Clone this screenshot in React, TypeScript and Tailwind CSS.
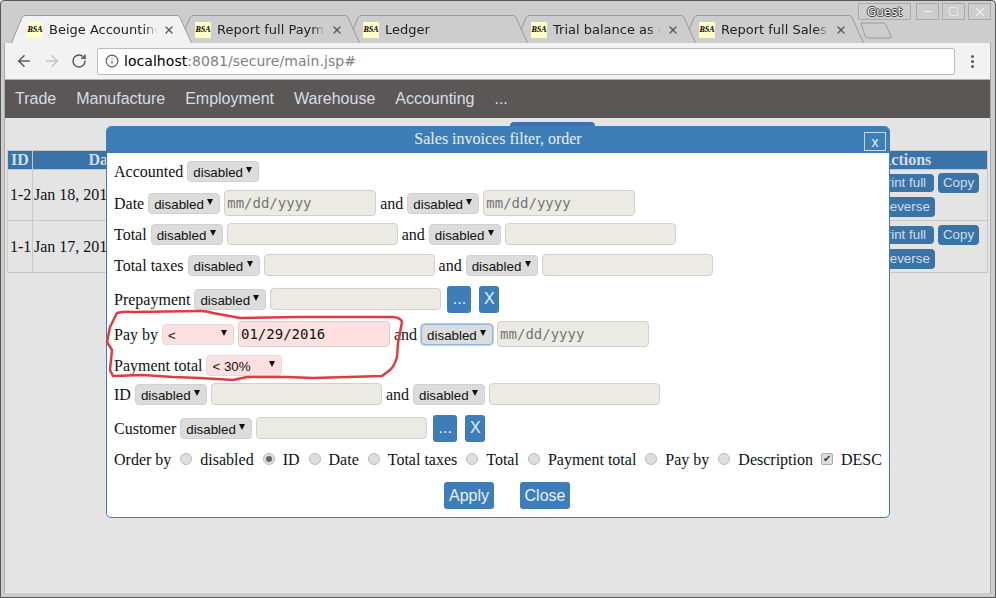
import { ArrowLeft, ArrowRight, Info, Minus, RotateCw, Square, X } from 'lucide-react';

const tabs = [
  { title: 'Beige Accounting', active: true, z: 'z-10' },
  { title: 'Report full Payments', active: false, z: 'z-[5]' },
  { title: 'Ledger', active: false, z: 'z-[4]' },
  { title: 'Trial balance as of', active: false, z: 'z-[3]' },
  { title: 'Report full Sales', active: false, z: 'z-[2]' },
];

const menu = ['Trade', 'Manufacture', 'Employment', 'Warehouse', 'Accounting', '...'];

const serif = "font-['Liberation_Serif',serif]";

function Tab({ title, active, z }: { title: string; active: boolean; z: string }) {
  return (
    <div className={`relative h-[28px] w-[168px] shrink-0 ${z}`}>
      <svg className="absolute left-0 top-0" width="181" height="28" viewBox="0 0 181 28">
        <path
          d="M0.5 28 L11 2.5 Q12 0.5 14 0.5 L166 0.5 Q168 0.5 169 2.5 L180.5 28"
          fill={active ? '#f2f2f2' : '#cdcdcd'}
          stroke="#9a9a9a"
        />
      </svg>
      <div className="absolute left-[16px] top-[7px] flex items-center">
        <Favicon />
        <span className="ml-[6px] w-[108px] overflow-hidden whitespace-nowrap font-['DejaVu_Sans',sans-serif] text-[13px] leading-[16px] text-[#222] [mask-image:linear-gradient(to_right,black_88%,transparent)]">
          {title}
        </span>
      </div>
      {title !== 'Ledger' && (
        <X className="absolute left-[152px] top-[9px] text-[#555]" size={12} strokeWidth={2.5} />
      )}
    </div>
  );
}

function Favicon() {
  return (
    <span className="flex h-[16px] w-[16px] items-center justify-center bg-[#ffffc8] font-['Liberation_Serif',serif] text-[8px] font-bold italic text-black">
      BSA
    </span>
  );
}

function Sel({
  label = 'disabled',
  w = 'w-[72px]',
  tone = 'plain',
}: {
  label?: string;
  w?: string;
  tone?: 'plain' | 'pink' | 'focus';
}) {
  const toneClass =
    tone === 'pink'
      ? 'bg-[#ffe0e0] border-[#ddd]'
      : tone === 'focus'
        ? 'bg-[#dcdcdc] border-[#90b6ea] shadow-[0_0_0_1px_#b4cdf2]'
        : 'bg-[#dcdcdc] border-[#d0d0d0]';
  return (
    <div
      className={`relative mb-[2px] flex h-[21px] shrink-0 items-center rounded-[4px] border pl-[5px] font-['Liberation_Sans',sans-serif] text-[13.33px] text-[#111] ${w} ${toneClass}`}
    >
      <span className="pt-[3px]">{label}</span>
      <svg className="absolute right-[6px] top-[5px]" width="6" height="6" viewBox="0 0 6 6">
        <polygon points="0,0 6,0 3,6" fill="#111" />
      </svg>
    </div>
  );
}

function Field({
  w = 'w-[171px]',
  date = false,
  value,
  pink = false,
}: {
  w?: string;
  date?: boolean;
  value?: string;
  pink?: boolean;
}) {
  return (
    <input
      readOnly
      value={value ?? ''}
      placeholder={date ? 'mm/dd/yyyy' : ''}
      className={`mb-[2px] shrink-0 rounded-[4px] border border-[#d0d0d0] px-[2px] font-['DejaVu_Sans_Mono',monospace] text-[14px] text-[#111] placeholder:text-[#757575] ${w} ${
        date ? 'h-[26px]' : 'h-[22px]'
      } ${pink ? 'bg-[#ffe0e0]' : 'bg-[#ebebe4]'}`}
    />
  );
}

function Btn({ label, w }: { label: string; w: string }) {
  return (
    <button
      className={`flex h-[27px] items-center justify-center rounded-[3px] bg-[#3d7eb8] font-['Liberation_Sans',sans-serif] text-[16px] text-[#e8f0f8] ${w}`}
    >
      {label}
    </button>
  );
}

function Radio({ on = false }: { on?: boolean }) {
  return (
    <span className="mb-[2px] flex h-[12px] w-[12px] shrink-0 items-center justify-center rounded-full border border-[#bbb] bg-[#dedede]">
      {on && <span className="h-[6px] w-[6px] rounded-full bg-[#666]" />}
    </span>
  );
}

function ActionBtn({ label, cls }: { label: string; cls: string }) {
  return (
    <span
      className={`flex items-center justify-center whitespace-nowrap rounded-[4px] bg-[#3a73a8] font-['Liberation_Sans',sans-serif] text-[13.33px] font-normal text-[#d3dde8] ${cls}`}
    >
      {label}
    </span>
  );
}

function TableRow({ id, date, h }: { id: string; date: string; h: string }) {
  return (
    <tr className={h}>
      <td className="whitespace-nowrap border border-[#c8c8c8] px-[2px]">{id}</td>
      <td className="whitespace-nowrap border border-[#c8c8c8] px-[1px]">{date}</td>
      <td className="border border-[#c8c8c8]" />
      <td className="border border-[#c8c8c8]">
        <div className="flex flex-col gap-[4px]">
          <div className="flex items-center justify-end gap-[4px] pr-[8px]">
            <ActionBtn label="Print full" cls="h-[18px] w-[64px]" />
            <ActionBtn label="Copy" cls="h-[20px] w-[41px]" />
          </div>
          <div className="flex justify-end pr-[52px]">
            <ActionBtn label="Reverse" cls="h-[20px] w-[60px]" />
          </div>
        </div>
      </td>
    </tr>
  );
}

function FilterDialog() {
  return (
    <div
      className={`absolute left-[106px] top-[126px] h-[392px] w-[784px] rounded-[5px] border border-[#3d7eb8] bg-white text-[16px] text-[#111] ${serif}`}
    >
      <div className="relative flex h-[26px] items-center justify-center rounded-t-[4px] bg-[#3d7eb8] pb-[2px] text-[#e8f0f8]">
        Sales invoices filter, order
        <span className="absolute right-[3px] top-[5px] flex h-[19px] w-[22px] items-center justify-center border border-[#c8d8e8] font-['Liberation_Sans',sans-serif] text-[14px] leading-none">
          x
        </span>
      </div>
      <div className="flex flex-col px-[7px] pt-[4px]">
        <div className="flex h-[28px] items-center gap-[4px] pt-[2px]">
          Accounted <Sel />
        </div>
        <div className="flex h-[36px] items-center gap-[4px] pt-[2px]">
          Date <Sel /> <Field w="w-[152px]" date /> and <Sel /> <Field w="w-[152px]" date />
        </div>
        <div className="flex h-[28px] items-center gap-[4px]">
          Total <Sel /> <Field /> and <Sel /> <Field />
        </div>
        <div className="flex h-[32px] items-center gap-[4px] pt-[2px]">
          Total taxes <Sel /> <Field /> and <Sel /> <Field />
        </div>
        <div className="flex h-[38px] items-center gap-[4px]">
          Prepayment <Sel /> <Field />
          <Btn label="..." w="mb-[2px] ml-[2px] w-[24px]" />
          <Btn label="X" w="mb-[2px] ml-[4px] w-[20px]" />
        </div>
        <div className="flex h-[30px] items-center gap-[4px] pt-[2px]">
          Pay by <Sel label="<" tone="pink" /> <Field w="w-[152px]" date value="01/29/2016" pink /> and{' '}
          <Sel tone="focus" /> <Field w="w-[152px]" date />
        </div>
        <div className="flex h-[32px] items-center gap-[4px] pt-[2px]">
          Payment total <Sel label="< 30%" tone="pink" w="w-[76px]" />
        </div>
        <div className="flex h-[28px] items-center gap-[4px]">
          ID <Sel /> <Field /> and <Sel /> <Field />
        </div>
        <div className="flex h-[40px] items-center gap-[4px]">
          Customer <Sel /> <Field />
          <Btn label="..." w="mb-[2px] ml-[2px] w-[24px]" />
          <Btn label="X" w="mb-[2px] ml-[4px] w-[20px]" />
        </div>
        <div className="flex h-[20px] items-center whitespace-nowrap pt-[2px]">
          <span className="mr-[9px]">Order by</span>
          {['disabled', 'ID', 'Date', 'Total taxes', 'Total', 'Payment total', 'Pay by'].map((name) => (
            <span key={name} className="mr-[9px] flex items-center gap-[8px]">
              <Radio on={name === 'ID'} />
              {name}
            </span>
          ))}
          <span className="mr-[8px] flex items-center gap-[8px]">
            <Radio />
            Description
          </span>
          <span className="flex items-center gap-[8px]">
            <span className="mb-[2px] flex h-[12px] w-[12px] items-center justify-center rounded-[2px] border border-[#aaa] bg-[#dedede] text-[10px] leading-none text-[#333]">
              ✔
            </span>
            DESC
          </span>
        </div>
        <div className="mt-[13px] flex justify-center gap-[26px] pl-[18px]">
          <Btn label="Apply" w="w-[50px]" />
          <Btn label="Close" w="w-[50px]" />
        </div>
      </div>
    </div>
  );
}

export default function App() {
  return (
    <div className="relative h-[598px] w-[996px] overflow-hidden rounded-t-[4px] border border-[#555] bg-[#cdcdcd]">
      {/* tab strip */}
      <div className="flex h-[42px] pl-[10px] pt-[14px]">
        {tabs.map((t) => (
          <Tab key={t.title} {...t} />
        ))}
        <svg className="relative z-0 ml-[9px] mt-[7px]" width="32" height="17" viewBox="0 0 32 17">
          <path
            d="M1 1 H23 Q25 1 26 3 L31 14 Q31.5 16 29 16 H8 Q6 16 5 14 Z"
            fill="#cdcdcd"
            stroke="#9a9a9a"
          />
        </svg>
      </div>

      {/* window buttons */}
      <div className="absolute right-[4px] top-[2px] flex gap-[3px]">
        <span className="mr-[2px] flex h-[17px] w-[53px] items-center justify-center rounded-[1px] border border-[#aaa] font-['DejaVu_Sans',sans-serif] text-[12px] text-[#f4f4f4] [text-shadow:1px_0_0_#444,-1px_0_0_#444,0_1px_0_#444,0_-1px_0_#444]">
          Guest
        </span>
        <span className="flex h-[17px] w-[23px] items-center justify-center border border-[#aaa] text-[#eee]">
          <Minus size={13} strokeWidth={2} />
        </span>
        <span className="flex h-[17px] w-[23px] items-center justify-center border border-[#aaa] text-[#eee]">
          <Square size={11} strokeWidth={2} />
        </span>
        <span className="flex h-[17px] w-[23px] items-center justify-center border border-[#aaa] text-[#eee]">
          <X size={14} strokeWidth={2} />
        </span>
      </div>

      <div className="ml-[3px] mr-[3px] w-[987px] border-l border-r border-[#aaa]">
        {/* toolbar */}
        <div className="flex h-[37px] items-center border-b border-[#b0b0b0] bg-[#f2f2f2]">
          <ArrowLeft className="ml-[10px] text-[#5a5a5a]" size={18} strokeWidth={2} />
          <ArrowRight className="ml-[10px] text-[#c4c4c4]" size={18} strokeWidth={2} />
          <RotateCw className="ml-[10px] text-[#5a5a5a]" size={16} strokeWidth={2.2} />
          <div className="ml-[10px] flex h-[27px] w-[858px] items-center rounded-[2px] border border-[#bbb] bg-white pl-[7px] font-['DejaVu_Sans',sans-serif] text-[14px] tracking-[0.05px]">
            <Info className="text-[#5a5a5a]" size={14} strokeWidth={2} />
            <span className="ml-[5px] text-black">localhost</span>
            <span className="text-[#808080]">:8081/secure/main.jsp#</span>
          </div>
          <span className="ml-[16px] flex flex-col gap-[2px]">
            <span className="h-[3px] w-[3px] rounded-full bg-[#5a5a5a]" />
            <span className="h-[3px] w-[3px] rounded-full bg-[#5a5a5a]" />
            <span className="h-[3px] w-[3px] rounded-full bg-[#5a5a5a]" />
          </span>
        </div>

        {/* app menu */}
        <div className="flex h-[38px] items-center gap-[20px] bg-[#5b5756] pl-[10px] font-['Liberation_Sans',sans-serif] text-[16px] text-[#d6dde6]">
          {menu.map((m) => (
            <span key={m}>{m}</span>
          ))}
        </div>

        {/* page behind the dialog */}
        <div className={`h-[475px] bg-[#e4e4e4] pt-[4px] text-[16px] leading-[18px] text-[#111] ${serif}`}>
          <div className="flex h-[28px] justify-center">
            <span className="ml-[109px] h-[28px] w-[85px] rounded-[4px] bg-[#3a73a8]" />
          </div>
          <table className="ml-[2px] w-[981px] table-fixed border-collapse">
            <colgroup>
              <col className="w-[25px]" />
              <col className="w-[144px]" />
              <col />
              <col className="w-[164px]" />
            </colgroup>
            <thead>
              <tr className="h-[19px] bg-[#3a73a8] font-bold text-[#d3dde8]">
                <th className="border border-[#c8c8c8]">ID</th>
                <th className="border border-[#c8c8c8]">Date</th>
                <th className="border border-[#c8c8c8]" />
                <th className="border border-[#c8c8c8]">Actions</th>
              </tr>
            </thead>
            <tbody>
              <TableRow id="1-2" date="Jan 18, 2016" h="h-[51px]" />
              <TableRow id="1-1" date="Jan 17, 2016" h="h-[52px]" />
            </tbody>
          </table>
        </div>
      </div>

      <div className="absolute left-[-1px] top-[-1px]">
        <FilterDialog />
        {/* red marker around the payment filters */}
        <svg className="pointer-events-none absolute left-0 top-0" width="996" height="598" viewBox="0 0 996 598">
          <path
            d="M117 313 Q125 311 133 312 L200 311 Q207 311 213 313 L240 318 L300 317 L393 317 Q401 318 402 322 L398 343 L397 357 Q395 365 390 370 L382 376 L313 378 L287 377 L247 377 L233 380 L200 378 L173 377 L143 375 L113 376 L110 370 L112 350 L107 342 L110 327 Z"
            fill="none"
            stroke="#e03c40"
            strokeWidth="2.5"
            strokeLinejoin="round"
          />
        </svg>
      </div>
    </div>
  );
}
